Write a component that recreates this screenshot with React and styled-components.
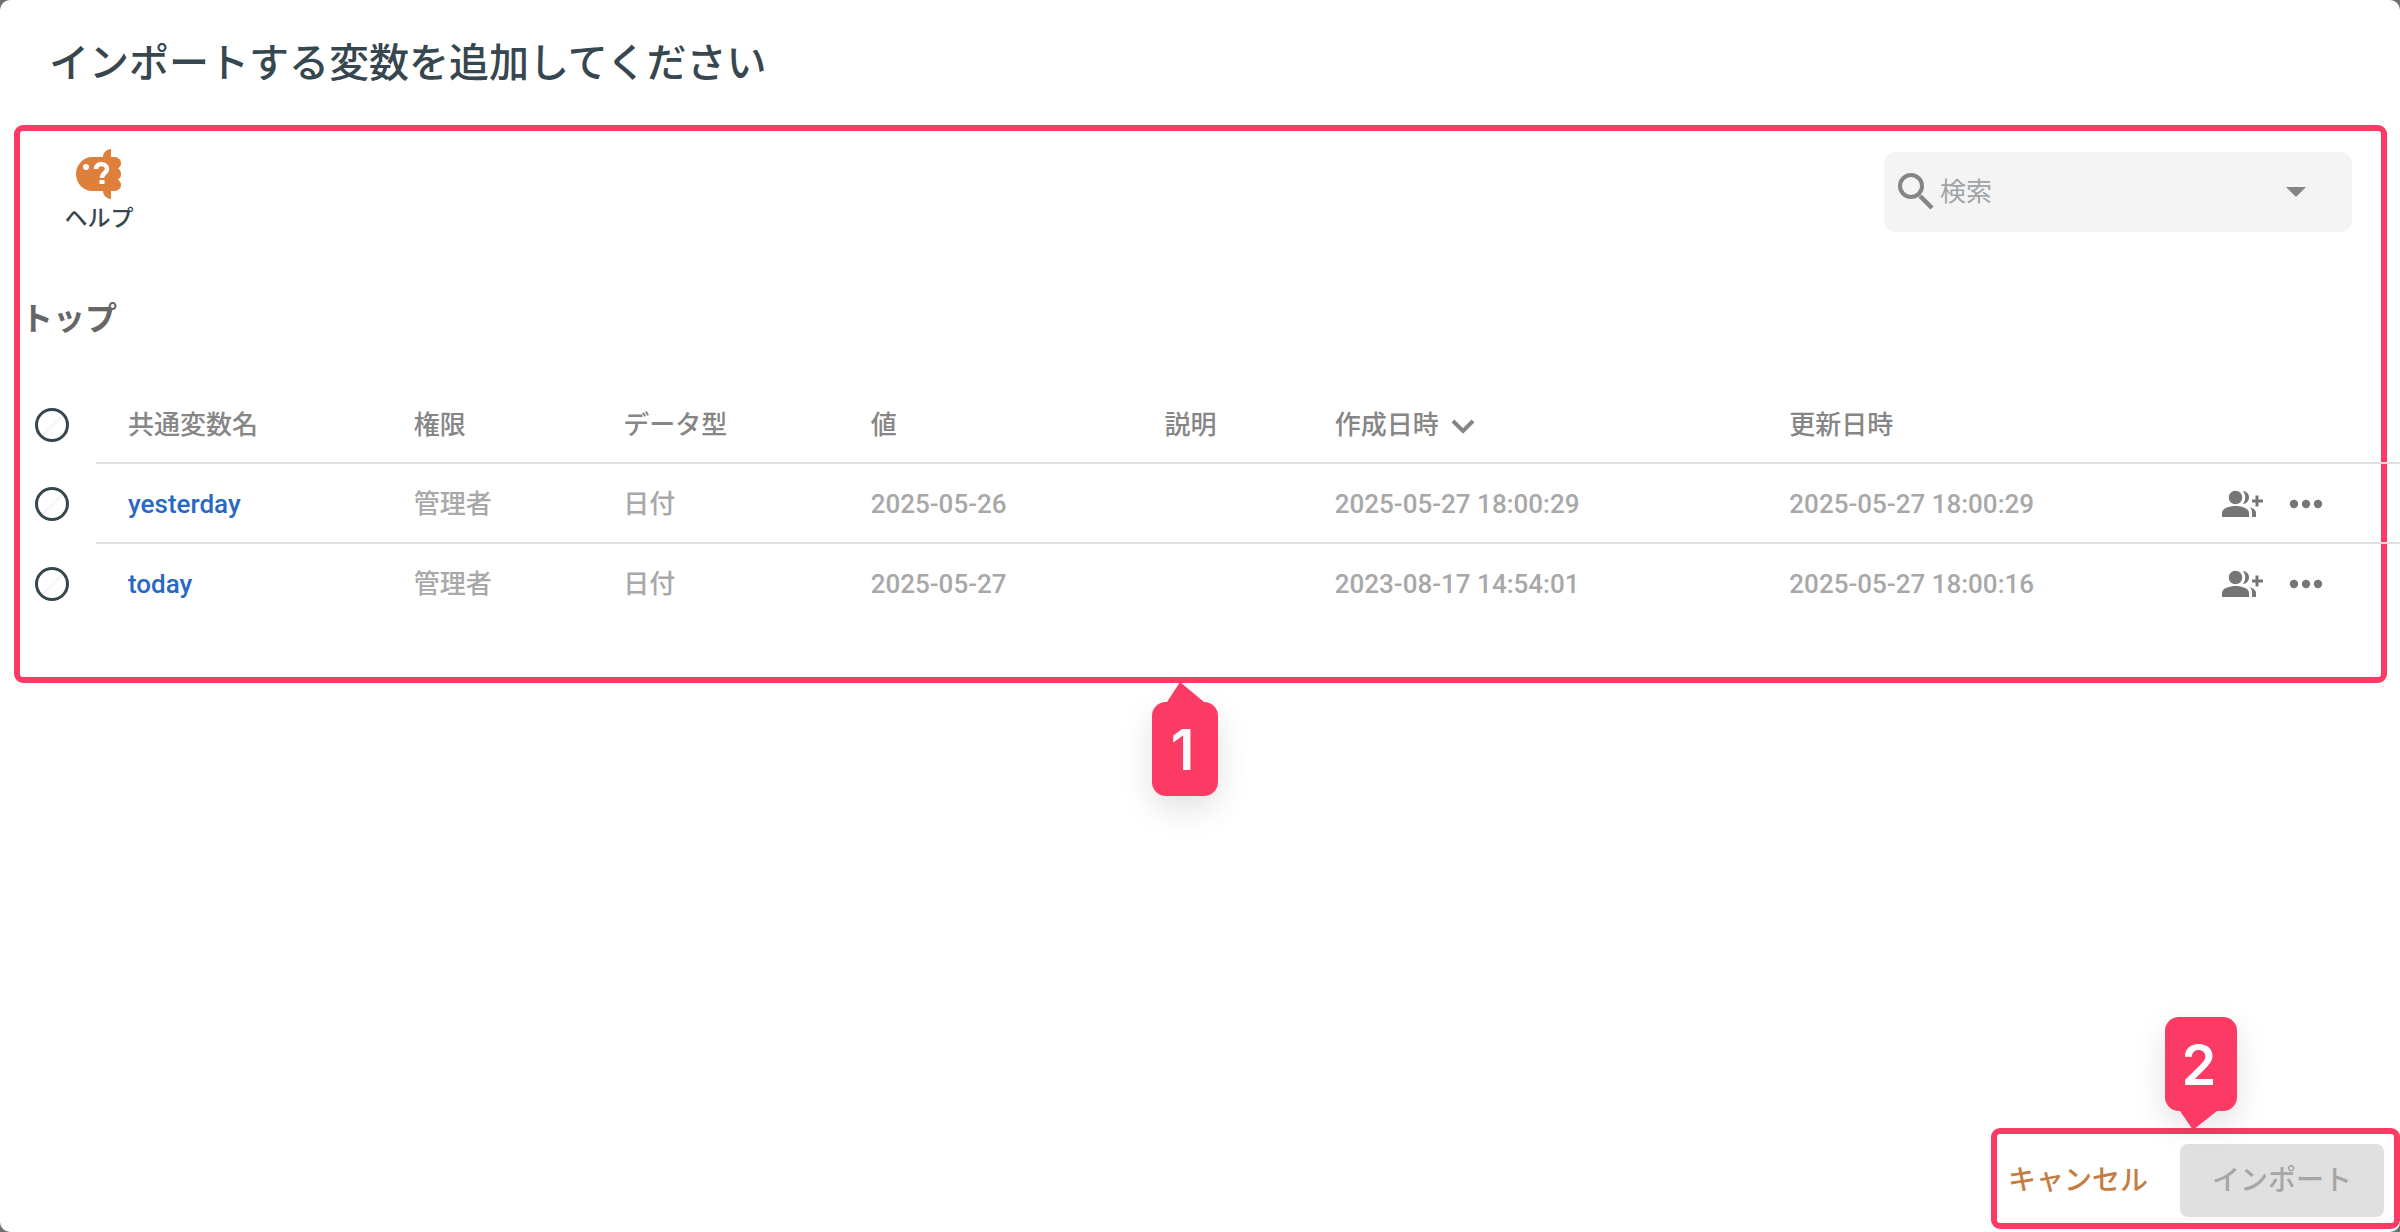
import React from "react";
import styled, { createGlobalStyle } from "styled-components";

const pink = "#fb3b64";

const GlobalStyle = createGlobalStyle`
  * { box-sizing: border-box; }
  body {
    margin: 0;
    background: #6f6f6f;
    font-family: Roboto, "Noto Sans CJK JP", sans-serif;
    font-weight: 500;
  }
  button, input { font: inherit; }
`;

const Dialog = styled.main`
  display: flex;
  flex-direction: column;
  min-height: 100vh;
  background: #fff;
  border-radius: 10px;
  overflow: hidden;
`;

const Title = styled.h1`
  margin: 0;
  padding: 34px 49px 31px;
  font-size: 40px;
  line-height: 60px;
  font-weight: 500;
  color: #37474f;
`;

const Panel = styled.section`
  position: relative;
  margin: 0 13px 0 14px;
  border: 6px solid ${pink};
  border-radius: 9px;
  padding: 21px 0 53px;
`;

const Toolbar = styled.div`
  display: flex;
  justify-content: space-between;
  align-items: flex-start;
  padding: 0 29px 0 40px;
`;

const HelpButton = styled.button`
  display: flex;
  flex-direction: column;
  align-items: center;
  gap: 4px;
  width: 78px;
  margin-top: -3px;
  padding: 0;
  border: 0;
  background: none;
  color: #37474f;
  font-size: 23px;
  line-height: 32px;
`;

const SearchBox = styled.div`
  display: flex;
  align-items: center;
  width: 468px;
  height: 80px;
  padding: 0 46px 0 8px;
  background: #f4f4f4;
  border-radius: 12px;
  color: #858585;
`;

const SearchInput = styled.input`
  flex: 1;
  min-width: 0;
  padding: 0;
  border: 0;
  outline: 0;
  background: none;
  font-size: 26px;
  font-weight: 400;
  color: #37474f;
  &::placeholder { color: #a0a4a6; opacity: 1; }
`;

const IconButton = styled.button`
  display: flex;
  padding: 0;
  border: 0;
  background: none;
  color: #757575;
`;

const Heading = styled.h2`
  margin: 0;
  padding: 61px 1px 42px;
  font-size: 32px;
  line-height: 46px;
  font-weight: 700;
  color: #666;
`;

const Table = styled.table`
  width: calc(100% + 19px);
  border-collapse: separate;
  border-spacing: 0;
  table-layout: fixed;
  font-size: 26px;
  line-height: 36px;
  text-align: left;
`;

const Col = styled.col`
  width: ${(p) => p.$w};
`;

const Cell = styled.td`
  height: 80px;
  padding: 2px 0 0;
  font-weight: 500;
  white-space: nowrap;
  color: #a8a8a8;
  border-bottom: 2px solid ${(p) => (p.$line ? "#e0e0e0" : "transparent")};
`;

const HeadCell = styled(Cell)`
  padding-top: 4px;
  color: #868686;
`;

const SortButton = styled.button`
  display: flex;
  align-items: center;
  gap: 8px;
  padding: 0;
  border: 0;
  background: none;
  color: inherit;
`;

const Radio = styled.input`
  appearance: none;
  display: block;
  width: 34px;
  height: 34px;
  margin: 0 0 0 15px;
  border: 3px solid #37474f;
  border-radius: 50%;
  background: linear-gradient(135deg, #fff 49%, #f4f4f4 50%, #fff 60%);
`;

const NameLink = styled.a`
  padding-left: 32px;
  color: #2a68c4;
  text-decoration: none;
`;

const NameHead = styled.span`
  padding-left: 32px;
`;

const Actions = styled.div`
  display: flex;
  align-items: center;
  gap: 25px;
`;

const Footer = styled.footer`
  position: relative;
  display: flex;
  align-items: center;
  gap: 32px;
  align-self: flex-end;
  margin: auto 0 3px;
  padding: 10px 10px 6px 11px;
  border: 6px solid ${pink};
  border-radius: 9px;
`;

const CancelButton = styled.button`
  padding: 0;
  border: 0;
  background: none;
  font-size: 28px;
  line-height: 40px;
  color: #c47d42;
`;

const ImportButton = styled.button`
  width: 204px;
  height: 73px;
  padding: 0;
  border: 0;
  border-radius: 8px;
  background: #e0e0e0;
  font-size: 28px;
  line-height: 40px;
  color: #a6a6a6;
`;

const Callout = styled.div`
  position: absolute;
  display: flex;
  align-items: center;
  justify-content: center;
  height: 94px;
  padding: 2px 4px 0 0;
  border-radius: 14px;
  background: ${pink};
  color: #fff;
  font-family: Inter, sans-serif;
  font-size: 56px;
  font-weight: 600;
  box-shadow: 0 12px 32px rgba(0, 0, 0, 0.12);
`;

const PanelCallout = styled(Callout)`
  top: calc(100% + 25px);
  left: calc(50% - 49px);
  width: 66px;
`;

const FooterCallout = styled(Callout)`
  bottom: calc(100% + 23px);
  left: 168px;
  width: 72px;
`;

const Pointer = styled.svg`
  position: absolute;
  left: 15px;
  ${(p) => (p.$up ? "bottom: 100%;" : "top: 100%;")}
`;

function HelpIcon() {
  return (
    <svg width="46" height="50" viewBox="0 0 46 50" aria-hidden="true">
      <path
        fill="#de803c"
        d="M35 0v8h3c4 0 7 2.500 7 6 0 2.500-1 4-3 5.500 2 1 3 3 3 5.500s-1 4.500-3 5.500c2 1.500 3 3 3 5.500 0 3.500-3 6-7 6h-3v8c-4-.5-8-3-8-8H16C7 42 0 34 0 25S7 8 16 8h11c0-5 4-7.500 8-8z"
      />
      <circle cx="10" cy="18" r="3" fill="#fff" />
      <path
        d="M20 20c0-7 11-6 11 0 0 4-5 4-5 9"
        fill="none"
        stroke="#fff"
        strokeWidth="4.500"
      />
      <path fill="#fff" d="M23.500 31h5v4h-5z" />
    </svg>
  );
}

function SearchIcon() {
  return (
    <svg width="48" height="48" viewBox="0 0 48 48" fill="none" stroke="currentColor" aria-hidden="true">
      <circle cx="19" cy="18" r="11" strokeWidth="4" />
      <path d="M28 28l12 12" strokeWidth="4.500" />
    </svg>
  );
}

function GroupAddIcon() {
  return (
    <svg width="42" height="28" viewBox="0 0 42 28" fill="currentColor" aria-hidden="true">
      <circle cx="13.500" cy="7.500" r="6.800" />
      <path d="M0 27v-4c0-5 8-7 13.500-7S27 18 27 23v4z" />
      <path d="M21 1c8 1 8 12 0 13 3-4 3-9 0-13zM28 17c4 1.500 6 3.500 6 6v4h-4v-4c0-2.500-.5-4-2-6z" />
      <path d="M33.500 5.500h3v4H41v3h-4.500v4h-3v-4H30v-3h3.500z" />
    </svg>
  );
}

function MoreIcon() {
  return (
    <svg width="34" height="10" viewBox="0 0 34 10" fill="currentColor" aria-hidden="true">
      <circle cx="5" cy="5" r="4.200" />
      <circle cx="17" cy="5" r="4.200" />
      <circle cx="29" cy="5" r="4.200" />
    </svg>
  );
}

const rows = [
  { name: "yesterday", value: "2025-05-26", created: "2025-05-27 18:00:29", updated: "2025-05-27 18:00:29" },
  { name: "today", value: "2025-05-27", created: "2023-08-17 14:54:01", updated: "2025-05-27 18:00:16" },
];

const columns = ["76px", "13.35%", "8.8%", "10.4%", "12.35%", "7.15%", "19.1%", "18.2%", "auto"];

export default function App() {
  return (
    <>
      <GlobalStyle />
      <Dialog>
        <Title>インポートする変数を追加してください</Title>
        <Panel>
          <Toolbar>
            <HelpButton type="button">
              <HelpIcon />
              ヘルプ
            </HelpButton>
            <SearchBox>
              <SearchIcon />
              <SearchInput type="text" aria-label="検索" placeholder="検索" />
              <IconButton type="button" aria-label="検索条件">
                <svg width="20" height="10" viewBox="0 0 20 10" aria-hidden="true">
                  <path fill="#858585" d="M0 0h20L10 10z" />
                </svg>
              </IconButton>
            </SearchBox>
          </Toolbar>
          <Heading>トップ</Heading>
          <Table>
            <colgroup>
              {columns.map((w, i) => (
                <Col key={i} $w={w} />
              ))}
            </colgroup>
            <thead>
              <tr>
                <HeadCell as="th">
                  <Radio type="radio" name="variable" aria-label="すべて" />
                </HeadCell>
                <HeadCell as="th" $line><NameHead>共通変数名</NameHead></HeadCell>
                <HeadCell as="th" $line>権限</HeadCell>
                <HeadCell as="th" $line>データ型</HeadCell>
                <HeadCell as="th" $line>値</HeadCell>
                <HeadCell as="th" $line>説明</HeadCell>
                <HeadCell as="th" $line>
                  <SortButton type="button">
                    作成日時
                    <svg width="32" height="24" viewBox="0 0 32 24" aria-hidden="true">
                      <path d="M6 8l10 10L26 8" fill="none" stroke="currentColor" strokeWidth="4" />
                    </svg>
                  </SortButton>
                </HeadCell>
                <HeadCell as="th" $line>更新日時</HeadCell>
                <HeadCell $line />
              </tr>
            </thead>
            <tbody>
              {rows.map((row, i) => {
                const line = i < rows.length - 1;
                return (
                  <tr key={row.name}>
                    <Cell>
                      <Radio type="radio" name="variable" aria-label={row.name} />
                    </Cell>
                    <Cell $line={line}><NameLink href="#">{row.name}</NameLink></Cell>
                    <Cell $line={line}>管理者</Cell>
                    <Cell $line={line}>日付</Cell>
                    <Cell $line={line}>{row.value}</Cell>
                    <Cell $line={line} />
                    <Cell $line={line}>{row.created}</Cell>
                    <Cell $line={line}>{row.updated}</Cell>
                    <Cell $line={line}>
                      <Actions>
                        <IconButton type="button" aria-label="権限を追加"><GroupAddIcon /></IconButton>
                        <IconButton type="button" aria-label="メニュー"><MoreIcon /></IconButton>
                      </Actions>
                    </Cell>
                  </tr>
                );
              })}
            </tbody>
          </Table>
          <PanelCallout>
            1
            <Pointer $up width="37" height="20" viewBox="0 0 37 20" aria-hidden="true">
              <path fill={pink} d="M13 0l24 20H0z" />
            </Pointer>
          </PanelCallout>
        </Panel>
        <Footer>
          <CancelButton type="button">キャンセル</CancelButton>
          <ImportButton type="button" disabled>インポート</ImportButton>
          <FooterCallout>
            2
            <Pointer width="37" height="19" viewBox="0 0 37 19" aria-hidden="true">
              <path fill={pink} d="M0 0h37L13 19z" />
            </Pointer>
          </FooterCallout>
        </Footer>
      </Dialog>
    </>
  );
}
